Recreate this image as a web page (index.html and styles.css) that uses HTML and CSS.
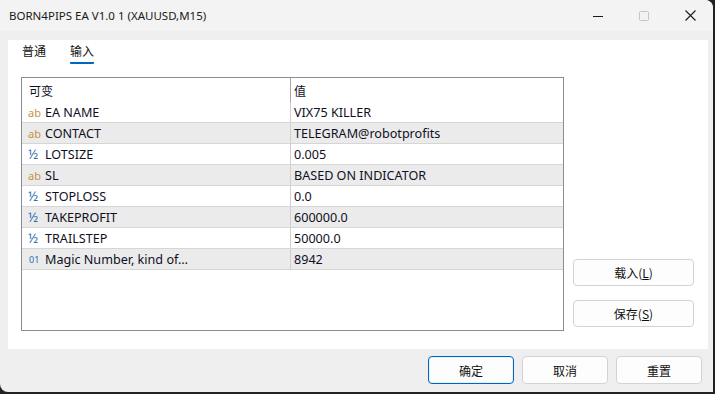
FILE: index.html
```html
<!DOCTYPE html>
<html lang="zh">
<head>
<meta charset="utf-8">
<title>BORN4PIPS EA</title>
<link rel="stylesheet" href="styles.css">
</head>
<body>
<div class="window">
  <div class="titlebar">
    <div class="title">BORN4PIPS EA V1.0 1 (XAUUSD,M15)</div>
    <div class="controls">
      <div class="ctl"><svg width="10" height="10" viewBox="0 0 10 10"><path d="M0 5.5h10" stroke="#1a1a1a" stroke-width="1"/></svg></div>
      <div class="ctl"><svg width="10" height="10" viewBox="0 0 10 10"><rect x="0.5" y="0.5" width="9" height="9" rx="1" fill="none" stroke="#c4c4c4" stroke-width="1"/></svg></div>
      <div class="ctl"><svg width="11" height="11" viewBox="0 0 11 11"><path d="M0.5 0.5L10.5 10.5M10.5 0.5L0.5 10.5" stroke="#1a1a1a" stroke-width="1.1"/></svg></div>
    </div>
  </div>
  <div class="client">
    <div class="panel">
      <div class="tabs">
        <div class="tab">普通</div>
        <div class="tab active">输入</div>
      </div>
      <div class="content">
        <div class="grid">
          <div class="row head">
            <div class="c1">可变</div>
            <div class="c2">值</div>
          </div>
          <div class="row">
            <div class="c1"><span class="ic ab">ab</span>EA NAME</div>
            <div class="c2">VIX75 KILLER</div>
          </div>
          <div class="row alt">
            <div class="c1"><span class="ic ab">ab</span>CONTACT</div>
            <div class="c2">TELEGRAM@robotprofits</div>
          </div>
          <div class="row">
            <div class="c1"><span class="ic half">½</span>LOTSIZE</div>
            <div class="c2">0.005</div>
          </div>
          <div class="row alt">
            <div class="c1"><span class="ic ab">ab</span>SL</div>
            <div class="c2">BASED ON INDICATOR</div>
          </div>
          <div class="row">
            <div class="c1"><span class="ic half">½</span>STOPLOSS</div>
            <div class="c2">0.0</div>
          </div>
          <div class="row alt">
            <div class="c1"><span class="ic half">½</span>TAKEPROFIT</div>
            <div class="c2">600000.0</div>
          </div>
          <div class="row">
            <div class="c1"><span class="ic half">½</span>TRAILSTEP</div>
            <div class="c2">50000.0</div>
          </div>
          <div class="row alt">
            <div class="c1"><span class="ic num">01</span>Magic Number, kind of…</div>
            <div class="c2">8942</div>
          </div>
        </div>
        <div class="side">
          <button class="btn side-btn">载入(<u>L</u>)</button>
          <button class="btn side-btn">保存(<u>S</u>)</button>
        </div>
      </div>
    </div>
    <div class="footer">
      <button class="btn foot-btn primary">确定</button>
      <button class="btn foot-btn">取消</button>
      <button class="btn foot-btn">重置</button>
    </div>
  </div>
</div>
</body>
</html>
```
FILE: styles.css
```css
* { box-sizing: border-box; }
html, body { margin: 0; padding: 0; }
body {
  width: 715px;
  height: 394px;
  background: #1f2326;
  font-family: "Noto Sans", "Noto Sans CJK SC", sans-serif;
  font-size: 12px;
  color: #000;
  overflow: hidden;
}
.window {
  width: 713px;
  height: 392px;
  background: #efefef;
  border-radius: 0 8px 0 8px;
  overflow: hidden;
  display: flex;
  flex-direction: column;
}
.titlebar {
  height: 31px;
  background: #f3f3f3;
  display: flex;
  align-items: center;
  justify-content: space-between;
}
.title {
  padding-left: 9px;
  font-size: 11.5px;
  color: #1a1a1a;
}
.controls { display: flex; height: 31px; }
.ctl {
  width: 46px;
  height: 31px;
  display: flex;
  align-items: center;
  justify-content: center;
}
.client {
  flex: 1;
  padding: 9px 5px 0 8px;
  display: flex;
  flex-direction: column;
}
.panel {
  height: 309px;
  background: #fff;
  padding: 0 0 0 13px;
  display: flex;
  flex-direction: column;
}
.tabs {
  display: flex;
  gap: 24px;
  padding-left: 1px;
  height: 37px;
}
.tab {
  font-family: "Noto Sans CJK SC", sans-serif;
  font-size: 12px;
  line-height: 16px;
  padding-top: 3px;
  height: 24px;
  color: #111;
}
.tab.active {
  border-bottom: 2px solid #0067c0;
  border-radius: 0 0 1px 1px;
}
.content {
  display: flex;
  align-items: flex-start;
}
.grid {
  width: 543px;
  height: 254px;
  border: 1px solid #8c8c94;
  background: #fff;
  font-size: 12.6px;
}
.row {
  display: flex;
  height: 21px;
  border-bottom: 1px solid #d6d6d6;
  align-items: stretch;
}
.row.alt { background: #ebebeb; }
.row.head {
  height: 24px;
  border-bottom: none;
  background: #fff;
  font-family: "Noto Sans CJK SC", sans-serif;
  font-size: 12px;
}
.c1, .c2 {
  display: flex;
  align-items: center;
  white-space: nowrap;
  color: #0f0f1f;
}
.c1 {
  width: 269px;
  padding-left: 1px;
  border-right: 1px solid #d0d0d0;
}
.row.head .c1 { padding-left: 7px; border-right-color: #a8a8a8; }
.c2 { padding-left: 3px; }
.row.head .c2 { padding-left: 3px; }
.ic {
  width: 22px;
  padding-left: 5px;
  font-size: 11px;
  flex-shrink: 0;
}
.ic.ab { color: #c39349; }
.ic.half { color: #2b6cae; font-size: 13px; }
.ic.num { color: #2b6cae; font-size: 9px; padding-left: 6px; }
.side {
  margin-left: 9px;
  height: 254px;
  display: flex;
  flex-direction: column;
  justify-content: flex-end;
  gap: 14px;
  padding-bottom: 4px;
}
.btn {
  font-family: "Noto Sans CJK SC", sans-serif;
  font-size: 12px;
  background: #fdfdfd;
  border: 1px solid #d3d3d3;
  border-radius: 4px;
  color: #111;
  padding: 0;
}
.btn u { text-underline-offset: 1px; }
.side-btn { width: 121px; height: 27px; }
.footer {
  display: flex;
  justify-content: flex-end;
  gap: 8px;
  padding: 7px 6px 0 0;
}
.foot-btn { width: 86px; height: 28px; }
.foot-btn.primary {
  border: 1px solid #0067c0;
  box-shadow: inset 0 0 0 1px #e6f0fa;
}
```
